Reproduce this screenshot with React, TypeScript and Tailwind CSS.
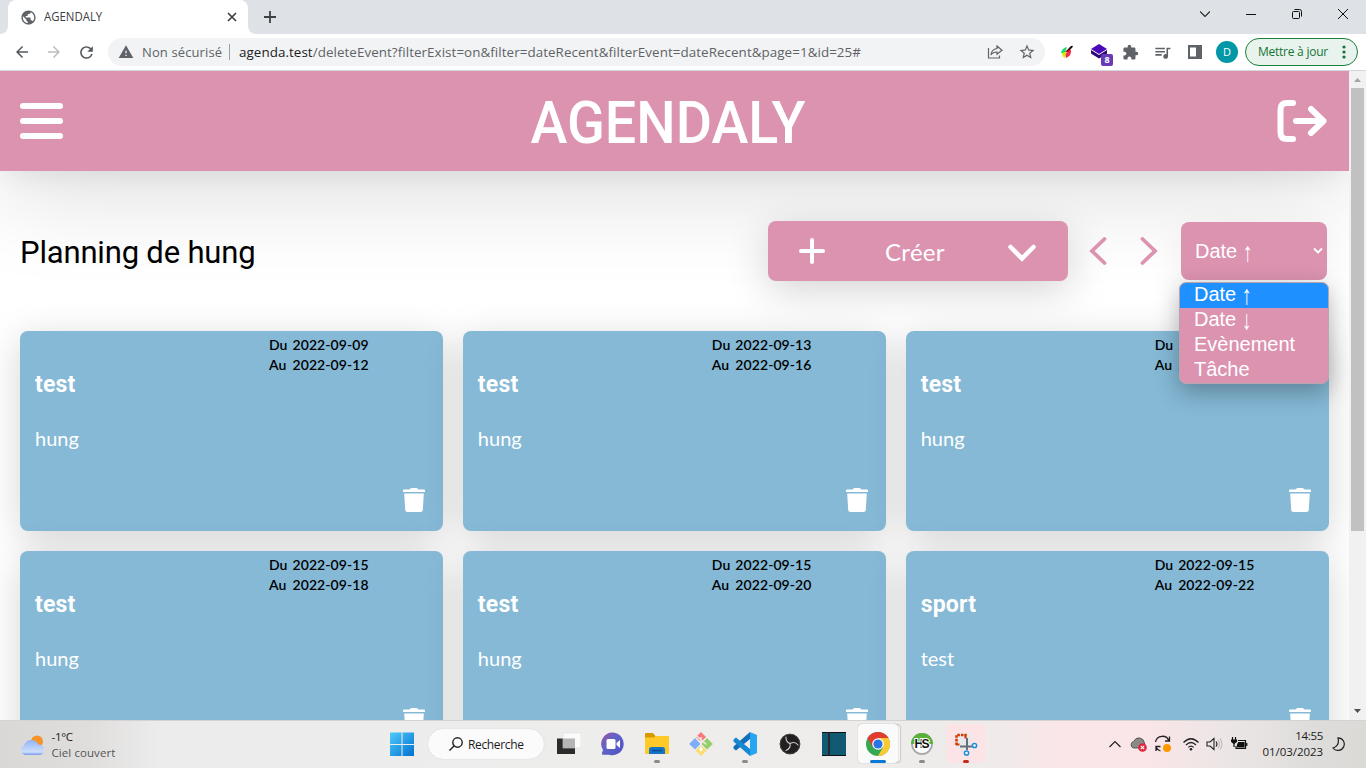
import React from "react";
import {
  MdArrowBack,
  MdArrowForward,
  MdExtension,
  MdPublic,
  MdQueueMusic,
  MdRefresh,
  MdStarBorder,
  MdWarning,
} from "react-icons/md";

type Entry = { title: string; text: string; from: string; to: string };

const entries: Entry[] = [
  { title: "test", text: "hung", from: "2022-09-09", to: "2022-09-12" },
  { title: "test", text: "hung", from: "2022-09-13", to: "2022-09-16" },
  { title: "test", text: "hung", from: "2022-09-15", to: "2022-09-17" },
  { title: "test", text: "hung", from: "2022-09-15", to: "2022-09-18" },
  { title: "test", text: "hung", from: "2022-09-15", to: "2022-09-20" },
  { title: "sport", text: "test", from: "2022-09-15", to: "2022-09-22" },
];

function TabStrip() {
  return (
    <div className="flex h-[34px] shrink-0 items-stretch bg-[#dee1e6]">
      <div className="w-2 bg-white">
        <div className="h-full rounded-br-lg bg-[#dee1e6]" />
      </div>
      <div className="flex w-[240px] items-center rounded-t-lg bg-white pr-[11px] pl-3">
        <MdPublic className="size-[17px] text-[#5f6368]" />
        <span className="ml-[7px] flex-1 origin-left scale-x-[0.95] font-['Open_Sans',sans-serif] text-[12px] text-[#3c4043]">
          AGENDALY
        </span>
        <svg viewBox="0 0 10 10" className="size-[10px]" stroke="#3c4043" strokeWidth="1.7">
          <path d="M1 1l8 8M9 1L1 9" />
        </svg>
      </div>
      <div className="w-2 bg-white">
        <div className="h-full rounded-bl-lg bg-[#dee1e6]" />
      </div>
      <svg viewBox="0 0 12 12" className="mt-[11px] ml-2 size-3" stroke="#3c4043" strokeWidth="1.8">
        <path d="M6 0v12M0 6h12" />
      </svg>
      <div className="flex-1" />
      <div className="flex items-center gap-[36px] pr-[18px] pb-[6px]">
        <svg viewBox="0 0 10 10" className="size-[10px]" fill="none" stroke="#222" strokeWidth="1.1">
          <path d="M0 2.5l5 5 5-5" />
        </svg>
        <svg viewBox="0 0 10 10" className="size-[10px]" stroke="#111" strokeWidth="1">
          <path d="M0 5.5h10" />
        </svg>
        <svg viewBox="0 0 10 10" className="size-[10px]" fill="none" stroke="#111" strokeWidth="1">
          <rect x=".5" y="2.5" width="7" height="7" rx="1" />
          <path d="M2.5 .5h5q2 0 2 2v5" />
        </svg>
        <svg viewBox="0 0 10 10" className="size-[10px]" stroke="#111" strokeWidth="1">
          <path d="M0 0l10 10M10 0L0 10" />
        </svg>
      </div>
    </div>
  );
}

function Toolbar() {
  return (
    <div className="flex h-[37px] shrink-0 items-center border-b border-[#d5d7da] bg-white pl-[13px] font-['Open_Sans',sans-serif]">
      <MdArrowBack className="size-[18px] text-[#54585d]" />
      <MdArrowForward className="ml-[14px] size-[18px] text-[#babcbe]" />
      <MdRefresh className="ml-[14px] size-[19px] text-[#54585d]" />
      <div className="ml-[12px] flex h-7 w-[937px] items-center rounded-full bg-[#f1f3f4] pl-[10px]">
        <MdWarning className="size-4 text-[#5f6368]" />
        <span className="ml-[8px] w-[80px] pt-px text-[13px] tracking-[0.12px] whitespace-nowrap text-[#5f6368]">
          Non sécurisé
        </span>
        <div className="mx-[7px] h-4 w-px bg-[#9aa0a6]" />
        <span className="ml-[2px] flex-1 pt-px text-[13.4px] tracking-[0.06px] whitespace-nowrap text-[#5f6368]">
          <span className="text-[#202124]">agenda.test</span>
          /deleteEvent?filterExist=on&filter=dateRecent&filterEvent=dateRecent&page=1&id=25#
        </span>
        <svg viewBox="0 0 16 16" className="mr-[15px] size-4" fill="none" stroke="#5f6368" strokeWidth="1.2">
          <path d="M1.500 4v10h11v-2.500M10 2l5 4.200-5 4V8C7 8 5.200 9 4 11c.3-3.500 2.500-6 6-6.500z" />
        </svg>
        <MdStarBorder className="mr-[9px] size-[18px] text-[#5f6368]" />
      </div>
      <svg viewBox="0 0 16 16" className="ml-[14px] size-4">
        <path d="M2 9q1-5 6-6l-2 6z" fill="#10e070" />
        <path d="M6 8l6-6-1 7z" fill="#e01010" />
        <path d="M6 10l6-4q1 5-5 8z" fill="#f02a50" />
        <path d="M3 9l4-1-1 6q-3-1-3-5z" fill="#d9f000" />
        <path d="M7 8l5-6q3-1 1 2z" fill="#111" />
      </svg>
      <div className="relative ml-[15px] size-[18px]">
        <svg viewBox="0 0 18 18" className="size-[18px]">
          <path d="M9 1l8 5-8 5-8-5z" fill="#4a08b8" />
          <path d="M1 7l8 5 8-5v3.500l-8 5-8-5z" fill="#2b0675" />
        </svg>
        <span className="absolute top-[11px] left-[11px] flex h-[12px] w-[12px] items-center justify-center rounded-[2px] bg-[#673ab7] text-[9px] font-bold text-white">
          8
        </span>
      </div>
      <MdExtension className="ml-[14px] size-[17px] text-[#5f6368]" />
      <MdQueueMusic className="ml-[14px] size-[19px] text-[#5f6368]" />
      <svg viewBox="0 0 14 14" className="ml-[16px] size-[14px]">
        <path d="M0 0h14v14H0z" fill="#5f6368" />
        <path d="M2 2.500h6v9H2z" fill="#fff" />
      </svg>
      <div className="ml-[14px] flex size-[22px] items-center justify-center rounded-full bg-[#0097a7] text-[11px] text-white">
        D
      </div>
      <div className="ml-[7px] flex h-7 w-[113px] items-center rounded-full border border-[#188038] bg-[#e9f3ee] pl-3">
        <span className="flex-1 text-[12px] tracking-[-0.25px] whitespace-nowrap text-[#137333]">Mettre à jour</span>
        <svg viewBox="0 0 4 14" className="mr-[11px] h-[14px] w-1" fill="#137333">
          <circle cx="2" cy="2" r="1.600" />
          <circle cx="2" cy="7" r="1.600" />
          <circle cx="2" cy="12" r="1.600" />
        </svg>
      </div>
    </div>
  );
}

function AppHeader() {
  return (
    <header className="relative z-10 flex h-[100px] shrink-0 items-center justify-between bg-[#dc93b0] pr-[22px] pl-5 shadow-[0_20px_100px_rgba(0,0,0,0.14),0_8px_30px_-6px_rgba(0,0,0,0.08)]">
      <div className="flex w-[50px] flex-col gap-[9px]">
        <div className="h-[6px] w-[42.5px] rounded-full bg-white" />
        <div className="h-[6px] w-[42.5px] rounded-full bg-white" />
        <div className="h-[6px] w-[42.5px] rounded-full bg-white" />
      </div>
      <h1 className="mr-[11px] w-[340px] scale-x-[0.927] pt-1 text-center font-[Roboto,sans-serif] text-[60px] leading-none font-medium whitespace-nowrap text-white">
        AGENDALY
      </h1>
      <svg
        viewBox="0 0 50 44"
        className="h-[44px] w-[50px]"
        fill="none"
        stroke="#fff"
        strokeWidth="6"
        strokeLinecap="round"
        strokeLinejoin="round"
      >
        <path d="M16 4h-6q-6.500 0-6.500 6.500v23q0 6.500 6.500 6.500h6" />
        <path d="M19 22h27M34 10l12.500 12L34 34" />
      </svg>
    </header>
  );
}

function Arrow({ glyph }: { glyph: string }) {
  return <span className="inline-block translate-y-[1px] scale-y-[1.35]">{glyph}</span>;
}

function Controls() {
  return (
    <div className="flex h-[160px] shrink-0 items-center px-5">
      <h2 className="flex-1 pt-[2px]">
        <span className="inline-block origin-left scale-x-[0.97] font-[Roboto,sans-serif] text-[32px] font-normal tracking-[-0.2px] text-black">
          Planning de hung
        </span>
      </h2>
      <button className="flex h-[60px] w-[300px] items-center rounded-lg bg-[#dc93b0] pl-[30px] text-white shadow-[0_10px_40px_rgba(0,0,0,0.17)]">
        <svg viewBox="0 0 28 28" className="size-7" stroke="#fff" strokeWidth="4" strokeLinecap="round">
          <path d="M14 3v22M3 14h22" />
        </svg>
        <span className="ml-[58px] w-[62px] pt-[2px] font-[Lato,sans-serif] text-[24px] tracking-[0.3px]">Créer</span>
        <svg
          viewBox="0 0 30 20"
          className="ml-[61px] mt-[3px] h-5 w-[30px]"
          fill="none"
          stroke="#fff"
          strokeWidth="4.5"
          strokeLinecap="round"
        >
          <path d="M3.500 4L15 15.500 26.500 4" />
        </svg>
      </button>
      <svg
        viewBox="0 0 18 30"
        className="ml-[21px] h-[30px] w-[18px]"
        fill="none"
        stroke="#dc93b0"
        strokeWidth="3.8"
        strokeLinecap="round"
      >
        <path d="M15.500 3L3 15l12.500 12" />
      </svg>
      <svg
        viewBox="0 0 18 30"
        className="ml-[33px] h-[30px] w-[18px]"
        fill="none"
        stroke="#dc93b0"
        strokeWidth="3.8"
        strokeLinecap="round"
      >
        <path d="M2.500 3L15 15 2.500 27" />
      </svg>
      <div className="relative mr-[2px] ml-[23px] h-[58px] w-[146px] rounded-lg bg-[#dc93b0] shadow-[0_10px_40px_rgba(0,0,0,0.06)]">
        <div className="flex h-full items-center justify-between pr-1 pl-[14px] font-['Liberation_Sans',sans-serif] text-[20px] text-white">
          <span>
            Date <Arrow glyph="↑" />
          </span>
          <svg viewBox="0 0 10 8" className="h-2 w-[10px]" fill="none" stroke="#fff" strokeWidth="1.8">
            <path d="M1 1.500l4 4 4-4" />
          </svg>
        </div>
        <ul className="absolute top-[60px] left-[-2px] z-20 w-[150px] overflow-hidden rounded-[7px] border border-[#b9a5ad] bg-[#dc93b0] font-['Liberation_Sans',sans-serif] text-[20px] leading-[23px] text-white shadow-[0_8px_24px_rgba(0,0,0,0.3)]">
          <li className="h-[25px] bg-[#1e90ff] pl-[14px]">
            Date <Arrow glyph="↑" />
          </li>
          <li className="h-[25px] pl-[14px]">
            Date <Arrow glyph="↓" />
          </li>
          <li className="h-[25px] pl-[14px]">Evènement</li>
          <li className="h-[25px] pl-[14px]">Tâche</li>
        </ul>
      </div>
    </div>
  );
}

function EventCard({ title, text, from, to }: Entry) {
  return (
    <article className="flex h-[200px] flex-col rounded-lg bg-[#85b9d6] px-[15px] shadow-[0_8px_38px_rgba(0,0,0,0.17)]">
      <div className="ml-[234px] pt-[4px] font-[Lato,sans-serif] text-[14px] leading-5 font-semibold tracking-[0.08px] whitespace-nowrap text-black">
        <div className="flex gap-[6px]">
          <span className="w-[17.5px]">Du</span>
          <span>{from}</span>
        </div>
        <div className="flex gap-[6px]">
          <span className="w-[17.5px]">Au</span>
          <span>{to}</span>
        </div>
      </div>
      <h3 className="-mt-[8px] h-[36px] font-[Roboto,sans-serif] text-[23px] leading-9 font-bold tracking-[0.2px] text-white">
        {title}
      </h3>
      <p className="mt-[20px] h-[30px] font-[Lato,sans-serif] text-[20px] leading-[30px] text-white">{text}</p>
      <svg viewBox="0 0 22 24" className="mt-[35px] mr-[3px] h-6 w-[22px] self-end" fill="#fff">
        <path d="M1 1.500h5.500q1-1.500 2-1.500h5q1 0 2 1.500H21q1 0 1 1v1.500H0V2.500q0-1 1-1zM1.200 5.500h19.600l-1 16.500q-.2 2-2.200 2H4.400q-2 0-2.200-2z" />
      </svg>
    </article>
  );
}

function Scrollbar() {
  return (
    <div className="flex w-[17px] shrink-0 flex-col items-center bg-[#f1f1f1]">
      <svg viewBox="0 0 17 17" className="size-[17px]" fill="#a3a3a3">
        <path d="M5 11l3.500-4 3.500 4z" />
      </svg>
      <div className="h-[443px] w-[13px] bg-[#c1c1c1]" />
      <div className="flex-1" />
      <svg viewBox="0 0 17 17" className="size-[17px]" fill="#505050">
        <path d="M5 6l3.500 4L12 6z" />
      </svg>
    </div>
  );
}

function TaskItem({ children, dot = "", box = "" }: { children: React.ReactNode; dot?: string; box?: string }) {
  return (
    <div className="flex h-12 w-[44.1px] justify-center">
      <div className={"mt-1 flex h-[39px] w-[40px] flex-col items-center rounded-[4px] pt-[8px] " + box}>
        {children}
        <div className={"mt-[4px] h-[3px] shrink-0 rounded-full " + dot} />
      </div>
    </div>
  );
}

const icon = "size-6 shrink-0";

function TaskIcons() {
  return (
    <div className="ml-[3px] flex">
      <TaskItem>
        <svg viewBox="0 0 24 24" className={icon}>
          <path d="M0 6.500h18V22H0z" fill="#2b2b2b" />
          <path d="M6 1h18v15H6z" fill="#fbfbfb" stroke="#ddd" strokeWidth=".6" />
          <path d="M6 6.500h12V16H6z" fill="#b5b5b5" />
        </svg>
      </TaskItem>
      <TaskItem>
        <svg viewBox="0 0 24 24" className={icon}>
          <defs>
            <linearGradient id="chat" x1="0" y1="0" x2="1" y2="1">
              <stop offset="0" stopColor="#a04fa0" />
              <stop offset=".4" stopColor="#6264c7" />
              <stop offset="1" stopColor="#4b50c4" />
            </linearGradient>
          </defs>
          <path d="M12 .5A11.400 11.400 0 1 1 8 22.800H2q-1.500 0-1-1.800l1-3A11.400 11.400 0 0 1 12 .5z" fill="url(#chat)" />
          <rect x="5.500" y="7" width="9" height="10" rx="1.500" fill="#fff" />
          <path d="M15.500 11l3.500-3v8l-3.500-3z" fill="#fff" />
        </svg>
      </TaskItem>
      <TaskItem dot="w-[6px] bg-[#8b8b8b]">
        <svg viewBox="0 0 24 24" className={icon}>
          <path d="M0 2q0-1 1-1h7l2.500 3V8H0z" fill="#d99a00" />
          <path d="M0 5.500h9l2-1.500h13v17q0 1-1 1H1q-1 0-1-1z" fill="#ffc928" />
          <path d="M4 22v-4.500q0-2.500 2.500-2.500h11q2.500 0 2.500 2.500V22z" fill="#1174c4" />
          <path d="M7 18.500h10" stroke="#0a4f96" strokeWidth="1.500" />
        </svg>
      </TaskItem>
      <TaskItem>
        <svg viewBox="0 0 24 24" className={icon}>
          <path d="M12 0l5 5-5 5-5-5z" fill="#f8787c" />
          <path d="M6 6l5.500 6L6 17.500.2 12z" fill="#80adf9" />
          <path d="M18 6l5.800 6-5.800 5.500-5.500-5.500z" fill="#93cf67" />
          <path d="M12 13l5.500 5.500L12 24l-5.500-5.500z" fill="#fbdc6c" />
          <path d="M7 3.500l10.500 9M12 5v14" stroke="#efe9ea" strokeWidth="1.500" />
          <circle cx="12" cy="17.500" r="1.700" fill="#fff" />
        </svg>
      </TaskItem>
      <TaskItem dot="w-[6px] bg-[#8b8b8b]">
        <svg viewBox="0 0 24 24" className={icon}>
          <path d="M17 0l7 3v18l-7 3z" fill="#27a4f2" />
          <path d="M17 0v7L3 18.500.5 16.500v-2z" fill="#0f6fb8" />
          <path d="M17 24v-7L3 5.500.5 7.500v2z" fill="#1687d2" />
        </svg>
      </TaskItem>
      <TaskItem>
        <svg viewBox="0 0 24 24" className={icon} fill="none">
          <circle cx="12" cy="12" r="10.300" fill="#211f20" />
          <g stroke="#d0d0d0" strokeWidth="1.100" strokeLinecap="round">
            <path d="M8 5q-.5 5 4 6.500" />
            <path d="M20 13q-3-4-8-1.500" />
            <path d="M8 18.500q5-2 4-7" />
          </g>
          <circle cx="12" cy="12" r="9.800" stroke="#4a4849" strokeWidth=".8" />
        </svg>
      </TaskItem>
      <TaskItem>
        <svg viewBox="0 0 24 24" className={icon}>
          <path d="M0 0h24v24H0z" fill="#125a72" />
          <path d="M0 .5h24M0 23.500h24" stroke="#111" />
          <path d="M7 0v24" stroke="#2b2226" strokeWidth="1.800" />
        </svg>
      </TaskItem>
      <TaskItem
        box="w-[35px] bg-[#fafafa] shadow-[0_0_1px_#999,3px_0_0_-1px_#f4f3f3,3px_0_1px_-0.5px_#ccc]"
        dot="w-[16px] bg-[#0a78d4]"
      >
        <svg viewBox="0 0 24 24" className={icon}>
          <circle cx="12" cy="12" r="12" fill="#34a853" />
          <path d="M1.600 6A12 12 0 0 1 22.400 6H12L6.500 15z" fill="#e33b2e" />
          <path d="M22.400 6A12 12 0 0 1 12 24l5.200-9L12 6z" fill="#fcc934" />
          <circle cx="12" cy="12" r="5.800" fill="#fff" />
          <circle cx="12" cy="12" r="4.600" fill="#2c73e8" />
        </svg>
      </TaskItem>
      <TaskItem dot="w-[6px] bg-[#8b8b8b]">
        <svg viewBox="0 0 24 24" className={icon}>
          <circle cx="12" cy="12" r="10" fill="#fff" stroke="#a8a8a8" strokeWidth="1.800" />
          <path d="M1 12a11 11 0 0 1 22 0z" fill="#59b13a" />
          <text
            x="12"
            y="16.300"
            textAnchor="middle"
            fontFamily="Liberation Sans"
            fontWeight="bold"
            fontSize="12"
            fill="#111"
            stroke="#fff"
            strokeWidth="2"
            paintOrder="stroke"
            textLength="15"
          >
            HS
          </text>
        </svg>
      </TaskItem>
      <TaskItem box="bg-[#fce4e6]" dot="w-[6px] bg-[#c42b1c]">
        <svg viewBox="0 0 24 24" className={icon + " overflow-visible"}>
          <path d="M2 1h13q2 0 2 2v12q0 2-2 2H2z" fill="#e9e9ec" />
          <path d="M2.500 13V3h10" fill="none" stroke="#d83b01" strokeWidth="2.600" strokeDasharray="2.600 1" />
          <path d="M2 12.500h3.500M11.500 2v4.500" stroke="#d83b01" strokeWidth="2.200" />
          <path d="M13 6v12M6 14.500h12" stroke="#66707a" strokeWidth="2" />
          <circle cx="20.500" cy="13.500" r="2.100" fill="#fff" stroke="#1b8edb" strokeWidth="1.500" />
          <circle cx="12.500" cy="21" r="2.100" fill="#fff" stroke="#1b8edb" strokeWidth="1.500" />
        </svg>
      </TaskItem>
    </div>
  );
}

function Taskbar() {
  return (
    <footer className="flex h-12 shrink-0 items-center bg-[linear-gradient(90deg,#dad8d6_0,#e0dedd_90px,#ececec_160px,#eeedec_700px,#eeeceb_980px,#fae5e8_1060px,#fae5e8_1150px,#ebe6e5_1230px,#dddcda_1320px,#dbdad7_1366px)] font-['Open_Sans',sans-serif] text-[12px] leading-4 text-[#1b1b1b] shadow-[inset_0_1px_0_#d4d2d2]">
      <div className="flex w-[389px] items-center pl-5">
        <svg viewBox="0 0 24 20" className="mt-[2px] h-5 w-6">
          <defs>
            <linearGradient id="cloud" x1="0" y1="0" x2="0" y2="1">
              <stop offset="0" stopColor="#8fb4f5" />
              <stop offset=".8" stopColor="#cfdefb" />
              <stop offset="1" stopColor="#7096e8" />
            </linearGradient>
          </defs>
          <circle cx="17" cy="6.500" r="6" fill="#f6932a" />
          <path d="M5 20a5 5 0 0 1-1-9.500Q6 5 11 5t7.500 4.500Q24 9.500 24 15q0 5-5 5z" fill="url(#cloud)" />
        </svg>
        <div className="ml-[7.5px] pt-[2px]">
          <div className="text-[11.5px] tracking-[-0.3px]">-1°C</div>
          <div className="text-[11.5px] tracking-[0.08px] whitespace-nowrap text-[#555]">Ciel couvert</div>
        </div>
      </div>
      <svg viewBox="0 0 24 24" className="ml-[1px] size-6">
        <defs>
          <linearGradient id="win" x1="0" y1="0" x2="1" y2="1">
            <stop offset="0" stopColor="#4fcbfb" />
            <stop offset="1" stopColor="#0070d0" />
          </linearGradient>
        </defs>
        <path d="M0 .500h11.500V12H0zM12.500 .500H24V12H12.500zM0 13h11.500v11.500H0zM12.500 13H24v11.500H12.500z" fill="url(#win)" />
      </svg>
      <div className="ml-[14px] flex h-[30px] w-[116px] items-center rounded-full bg-[#fbfbfb] pl-[21px] shadow-[0_0_1px_#bbb]">
        <svg viewBox="0 0 14 14" className="size-[14px]" fill="none" stroke="#222" strokeWidth="1.400">
          <circle cx="8.500" cy="5.500" r="4.700" />
          <path d="M5 9L.5 13.500" />
        </svg>
        <span className="ml-[5px] pt-px tracking-[-0.35px]">Recherche</span>
      </div>
      <TaskIcons />
      <div className="flex-1" />
      <div className="flex items-center">
        <svg viewBox="0 0 12 8" className="mr-[9px] h-2 w-3" fill="none" stroke="#222" strokeWidth="1.200">
          <path d="M.5 7L6 1.500 11.500 7" />
        </svg>
        <svg viewBox="0 0 18 16" className="mr-[6px] h-4 w-[18px]">
          <path d="M3.500 12a3.400 3.400 0 0 1 0-6.500Q6 1 10 2t4.500 5v5z" fill="#8a8a8a" stroke="#444" strokeWidth=".8" />
          <circle cx="12.500" cy="11.500" r="4.300" fill="#e0243a" />
          <path d="M10.800 9.800l3.400 3.400M14.200 9.800l-3.400 3.400" stroke="#fff" strokeWidth="1.200" />
        </svg>
        <svg viewBox="0 0 18 18" className="mr-[10px] size-[18px]" fill="none" stroke="#222" strokeWidth="1.300">
          <path d="M1.500 7A7 7 0 0 1 15 6M15.500 1.500V6H11M6.500 16A7 7 0 0 1 2 12M2 16v-4.500h4.500" />
          <circle cx="13" cy="13" r="4" fill="#ff9800" stroke="none" />
        </svg>
        <svg viewBox="0 0 18 14" className="mr-[6px] h-[14px] w-[18px]" fill="none" stroke="#222" strokeWidth="1.200">
          <path d="M1.500 5.500q7.500-7.500 15 0M4 8q5-5 10 0M6.300 10.400q2.700-2.700 5.400 0" />
          <circle cx="9" cy="12.300" r="1.300" fill="#222" stroke="none" />
        </svg>
        <svg viewBox="0 0 17 14" className="mr-[8px] h-[14px] w-[17px]" fill="none" stroke="#222" strokeWidth="1.100">
          <path d="M1 5h3l4-3.500v11L4 9H1z" />
          <path d="M10 4.500q2 2.500 0 5" />
          <path d="M12 3q3 4 0 8M14 1.500q4 5.500 0 11" stroke="#bbb" />
        </svg>
        <svg viewBox="0 0 17 14" className="mr-[13px] h-[14px] w-[17px]" fill="none" stroke="#111" strokeWidth="1.200">
          <path d="M7 3.500h7.500v8H5V9M15.800 6v3" />
          <path d="M7.500 5.500h5.500v4.500H6.500V8z" fill="#111" />
          <path d="M1.500 0v3M4.500 0v3M3 6v4" />
          <path d="M.5 3h5v1.500L3 6.500.5 4.500z" fill="#111" />
        </svg>
        <div className="w-[62px] text-right text-[11.5px] whitespace-nowrap">
          <div className="tracking-[-0.3px]">14:55</div>
          <div className="tracking-[-0.05px]">01/03/2023</div>
        </div>
        <svg viewBox="0 0 14 14" className="mr-[20px] ml-[9px] size-[14px]" fill="none" stroke="#222" strokeWidth="1.200">
          <path d="M6 .8A6.300 6.300 0 1 1 1 11q7-2.500 5-10.200z" />
        </svg>
      </div>
    </footer>
  );
}

export default function App() {
  return (
    <div className="flex h-[768px] w-[1366px] flex-col overflow-hidden bg-white">
      <TabStrip />
      <Toolbar />
      <div className="flex h-[649px] shrink-0 overflow-hidden">
        <main className="flex w-[1349px] flex-col overflow-hidden bg-white">
          <AppHeader />
          <div className="flex flex-col">
            <div className="relative z-20">
              <Controls />
            </div>
            <section className="grid shrink-0 grid-cols-3 gap-5 pr-[20.5px] pl-5">
              {entries.map((entry, index) => (
                <EventCard key={index} {...entry} />
              ))}
            </section>
          </div>
        </main>
        <Scrollbar />
      </div>
      <Taskbar />
    </div>
  );
}
